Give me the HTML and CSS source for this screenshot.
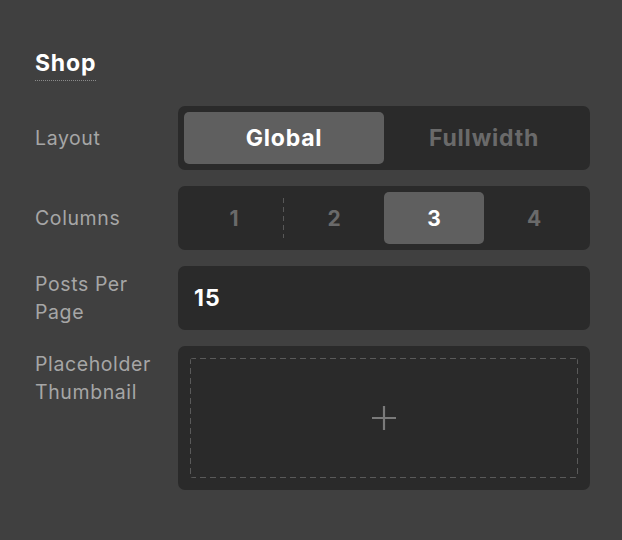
FILE: index.html
```html
<!DOCTYPE html>
<html>
<head>
<meta charset="utf-8">
<link rel="stylesheet" href="styles.css">
</head>
<body>
<div class="panel">
  <h2 class="title"><span>Shop</span></h2>
  <div class="rows">
    <div class="row">
      <div class="label">Layout</div>
      <div class="control seg seg2">
        <div class="opt active">Global</div>
        <div class="opt">Fullwidth</div>
      </div>
    </div>
    <div class="row">
      <div class="label">Columns</div>
      <div class="control seg seg4">
        <div class="opt num sep">1</div>
        <div class="opt num">2</div>
        <div class="opt num active">3</div>
        <div class="opt num">4</div>
      </div>
    </div>
    <div class="row">
      <div class="label">Posts Per Page</div>
      <div class="control input">15</div>
    </div>
    <div class="row">
      <div class="label">Placeholder Thumbnail</div>
      <div class="control upload">
        <div class="drop">
          <svg width="26" height="26" viewBox="0 0 26 26"><path d="M13 1V25M1 13H25" stroke="#7a7a7a" stroke-width="2.2" fill="none"/></svg>
        </div>
      </div>
    </div>
  </div>
</div>
</body>
</html>
```
FILE: styles.css
```css
html, body {
  margin: 0;
  padding: 0;
  background: #404040;
  font-family: Inter, "Noto Sans", sans-serif;
}
.panel {
  padding: 48px 32px 40px 35px;
}
.title {
  margin: 0 0 28px 0;
  font-size: 23px;
  font-weight: 700;
  letter-spacing: 0.8px;
  color: #ffffff;
  line-height: 30px;
}
.title span {
  border-bottom: 1px dotted #8a8a8a;
  padding-bottom: 3px;
}
.rows {
  display: flex;
  flex-direction: column;
  gap: 16px;
}
.row {
  display: flex;
  align-items: flex-start;
}
.label {
  width: 130px;
  margin-right: 13px;
  color: #a6a6a6;
  font-size: 19.5px;
  letter-spacing: 0.6px;
  line-height: 28px;
  padding-top: 4px;
}
.row:first-child .label, .row:nth-child(2) .label {
  padding-top: 18px;
}
.control {
  flex: 1;
  background: #2a2a2a;
  border-radius: 7px;
  box-sizing: border-box;
}
.seg {
  height: 64px;
  padding: 6px;
  display: flex;
}
.opt {
  flex: 1;
  display: flex;
  align-items: center;
  justify-content: center;
  font-weight: 700;
  font-size: 23px;
  letter-spacing: 0.8px;
  color: #6a6a6a;
  border-radius: 5px;
  position: relative;
}
.opt.active {
  background: #5f5f5f;
  color: #ffffff;
}
.opt.num {
  font-size: 21px;
  letter-spacing: 0;
}
.opt.sep::after {
  content: "";
  position: absolute;
  right: 0;
  top: 6px;
  bottom: 6px;
  width: 1px;
  background: repeating-linear-gradient(180deg, #585858 0 5px, transparent 5px 9px);
}
.input {
  height: 64px;
  display: flex;
  align-items: center;
  padding-left: 16px;
  color: #ffffff;
  font-weight: 700;
  font-size: 23px;
  letter-spacing: 1px;
}
.upload {
  height: 144px;
  padding: 12px;
}
.drop {
  height: 100%;
  box-sizing: border-box;
  border-radius: 3px;
  display: flex;
  align-items: center;
  justify-content: center;
  background:
    repeating-linear-gradient(90deg, #5a5a5a 0 6px, transparent 6px 10px) top left / 100% 1px no-repeat,
    repeating-linear-gradient(90deg, #5a5a5a 0 6px, transparent 6px 10px) bottom left / 100% 1px no-repeat,
    repeating-linear-gradient(180deg, #5a5a5a 0 6px, transparent 6px 10px) top left / 1px 100% no-repeat,
    repeating-linear-gradient(180deg, #5a5a5a 0 6px, transparent 6px 10px) top right / 1px 100% no-repeat;
}
.drop svg {
  display: block;
}
```
